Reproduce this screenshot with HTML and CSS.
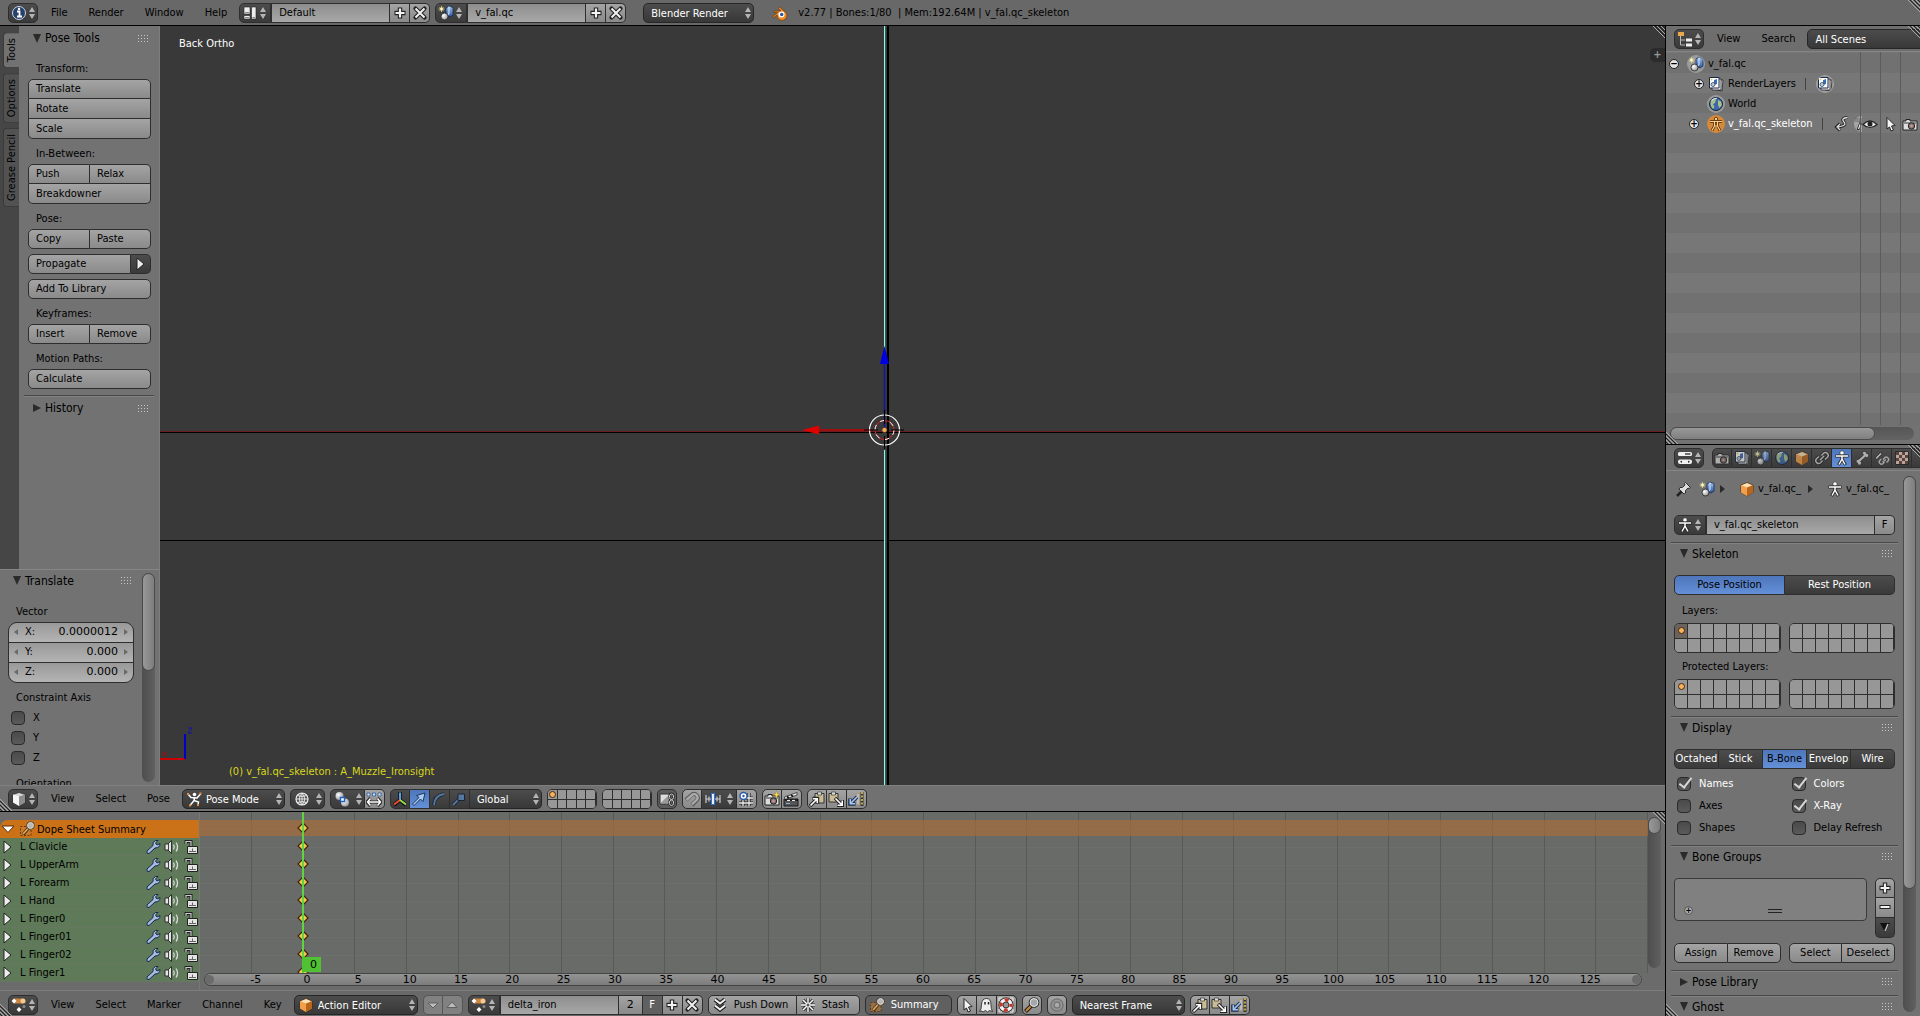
FILE: index.html
```html
<!DOCTYPE html>
<html lang="en">

<head>
    <meta charset="UTF-8">
    <meta name="viewport" content="width=device-width, initial-scale=1.0">
    <title>Blender</title>
    <link rel="stylesheet" href="styles.css">
</head>

<body>
    <!-- icon set, every icon is 16x16 -->
    <svg class="defs" aria-hidden="true">
        <defs>
            <linearGradient id="gBlue" x1="0" y1="0" x2="0" y2="1">
                <stop offset="0" stop-color="#9cc3f0" />
                <stop offset="1" stop-color="#2c56a0" />
            </linearGradient>
            <radialGradient id="gBall" cx=".35" cy=".35" r=".8">
                <stop offset="0" stop-color="#fff" />
                <stop offset="1" stop-color="#888" />
            </radialGradient>
        </defs>
        <symbol id="updown" viewBox="0 0 8 16">
            <path d="M4 2 7 7H1zM4 14 7 9H1z" fill="#b4b4b4" />
        </symbol>
        <symbol id="corner" viewBox="0 0 12 12">
            <path d="M0 0 12 12M4 0 12 8M8 0 12 4" stroke="#a8a8a8" />
            <path d="M2 0 12 10M6 0 12 6M10 0 12 2" stroke="#222" />
        </symbol>
        <symbol id="info" viewBox="0 0 16 16">
            <circle cx="8" cy="8" r="6.5" fill="#26416b" stroke="#c9d4e4" stroke-width="1" />
            <path d="M6 6.500H8.500V11M6 11.500H11" stroke="#fff" stroke-width="1.800" fill="none" />
            <circle cx="8" cy="4" r="1.200" fill="#fff" />
        </symbol>
        <symbol id="screens" viewBox="0 0 16 16">
            <path d="M2 2H8V9H2zM2 10.500H8V14H2zM9.500 2H14V14H9.500z" fill="#eee" stroke="#222" stroke-width=".6" />
            <path d="M3 12.500H7M3 7.500H7M10.500 12.500H13" stroke="#888" />
        </symbol>
        <symbol id="scene" viewBox="0 0 16 16">
            <path d="M8 3 11 1 15 2.500V10L12 12 8 10z" fill="url(#gBlue)" stroke="#16284a" stroke-width=".8" />
            <path d="M11 1.500V9L8.500 10" stroke="#dcecff" fill="none" />
            <circle cx="6.500" cy="11.500" r="3.500" fill="url(#gBall)" stroke="#222" stroke-width=".8" />
            <path d="M3.500 1V7M.5 4H6.500M1.500 2 5.500 6M5.500 2 1.500 6" stroke="#e8e090" stroke-width=".8" />
            <circle cx="3.500" cy="4" r="1.300" fill="#fffbc8" />
        </symbol>
        <symbol id="plus" viewBox="0 0 16 16">
            <path d="M8 2.500V13.500M2.500 8H13.500" stroke="#222" stroke-width="4.400" />
            <path d="M8 3.500V12.500M3.500 8H12.500" stroke="#f2f2f2" stroke-width="2.200" />
        </symbol>
        <symbol id="minus" viewBox="0 0 16 16">
            <path d="M2.500 8H13.500" stroke="#222" stroke-width="4" />
            <path d="M3.500 8H12.500" stroke="#f2f2f2" stroke-width="2" />
        </symbol>
        <symbol id="cross" viewBox="0 0 16 16">
            <path d="M3.500 3.500 12.500 12.500M12.500 3.500 3.500 12.500" stroke="#222" stroke-width="4.200" stroke-linecap="round" />
            <path d="M3.500 3.500 12.500 12.500M12.500 3.500 3.500 12.500" stroke="#f2f2f2" stroke-width="2" />
        </symbol>
        <symbol id="blender" viewBox="0 0 16 16">
            <path d="M7.500 2 14 7.500A5 5 0 1 1 5 10L1.500 12.800.8 11.500 5.500 7.500H2V6H9L6.500 3.500z" fill="#f08a24" stroke="#6d3a08" stroke-width=".7" />
            <circle cx="9.500" cy="9.500" r="3" fill="#fff" />
            <circle cx="9.700" cy="9.500" r="1.700" fill="#2355a0" />
        </symbol>
        <symbol id="view3d" viewBox="0 0 16 16">
            <path d="M2 3.500 8 1.500 14 3.500V11.500L8 15 2 11.500z" fill="#d8d8d8" stroke="#222" stroke-width=".6" />
            <path d="M2 3.500 8 5.500V15L2 11.500z" fill="#f6f6f6" />
            <path d="M14 3.500 8 5.500V15L14 11.500z" fill="#8d8d8d" />
        </symbol>
        <symbol id="pose" viewBox="0 0 16 16">
            <circle cx="8.500" cy="3.500" r="1.800" fill="#fff" />
            <path d="M2 3 5 6.500 11 7 14.500 3M8.500 7 8 9.500 12.500 11 12 14M8 9.500 4 14.500" stroke="#fff" stroke-width="1.500" fill="none" />
            <path d="M1 2h2v2H1zM13.500 1.500h2v2h-2zM11 13h2v2h-2zM3 13.500h2v2H3z" fill="#e68a3c" />
        </symbol>
        <symbol id="wire" viewBox="0 0 16 16">
            <circle cx="8" cy="8" r="6" fill="#555" stroke="#eee" stroke-width="1.200" />
            <path d="M8 2V14M2 8H14M3.500 4.500Q8 6.500 12.500 4.500M3.500 11.500Q8 9.500 12.500 11.500M8 2Q2.500 8 8 14M8 2Q13.500 8 8 14" stroke="#eee" stroke-width=".9" fill="none" />
        </symbol>
        <symbol id="pivot" viewBox="0 0 16 16">
            <circle cx="5.500" cy="5" r="4" fill="url(#gBall)" />
            <circle cx="11" cy="11.500" r="4" fill="url(#gBall)" />
            <path d="M6.500 6.500h4v4h-4z" fill="#fff" stroke="#1f5fc8" stroke-width="1.400" />
        </symbol>
        <symbol id="centers" viewBox="0 0 16 16">
            <path d="M4.500 7 1 11 4.500 15M11.500 7 15 11 11.500 15M2 11H14" stroke="#222" stroke-width="3" fill="none" />
            <path d="M4.500 7.500 1.500 11 4.500 14.500M11.500 7.500 14.500 11 11.500 14.500M2 11H14" stroke="#fff" stroke-width="1.500" fill="none" />
            <path d="M1 2h3v3H1zM6.500 2h3v3h-3zM12 2h3v3h-3z" fill="#cfe0f6" stroke="#2d5b98" stroke-width=".8" />
        </symbol>
        <symbol id="axes" viewBox="0 0 16 16">
            <path d="M8 1V9M8 9 2 14M8 9 14 14" stroke="#111" stroke-width="3.600" />
            <path d="M8 1.500V9" stroke="#5b9cf0" stroke-width="2" />
            <path d="M8 9 2 13.500" stroke="#ee4a30" stroke-width="2" />
            <path d="M8 9 14 13.500" stroke="#8fe04c" stroke-width="2" />
        </symbol>
        <symbol id="arrow" viewBox="0 0 16 16">
            <path d="M1.500 13 8 6.500 5.500 4.500 14 2 12 10.500 9.500 8 3 14.500z" fill="#a9cbf4" stroke="#12284e" stroke-width=".9" />
        </symbol>
        <symbol id="arc" viewBox="0 0 16 16">
            <path d="M3 14Q3 5 13 3" stroke="#1a2433" stroke-width="3.600" fill="none" />
            <path d="M3 14Q3 5 13 3" stroke="#56789f" stroke-width="1.800" fill="none" />
        </symbol>
        <symbol id="scale" viewBox="0 0 16 16">
            <path d="M2 14 9 7" stroke="#1a2433" stroke-width="3.500" />
            <path d="M2 14 9 7" stroke="#56789f" stroke-width="1.800" />
            <path d="M7 3h6.500v6.500H7z" fill="#56789f" stroke="#1a2433" />
        </symbol>
        <symbol id="layerlock" viewBox="0 0 16 16">
            <path d="M1 3H11V13H1z" fill="#ddd" stroke="#333" />
            <path d="M2 11.500 10 4V12H2z" fill="#999" />
            <path d="M12.500 2.500a2 2 0 0 1 2 2v2a2 2 0 0 1-4 0v-2a2 2 0 0 1 2-2zM12.500 8.500a2 2 0 0 1 2 2v2a2 2 0 0 1-4 0v-2a2 2 0 0 1 2-2z" fill="none" stroke="#222" stroke-width="2" />
            <path d="M12.500 3a2 2 0 0 1 2 2v1.500a2 2 0 0 1-4 0V5a2 2 0 0 1 2-2zM12.500 9a2 2 0 0 1 2 2v1.500a2 2 0 0 1-4 0V11a2 2 0 0 1 2-2z" fill="none" stroke="#ccc" />
        </symbol>
        <symbol id="magnet" viewBox="0 0 16 16">
            <path d="M2 9 8 3.500A3.800 3.800 0 0 1 13 9L8 14" stroke="#555" stroke-width="4" fill="none" />
            <path d="M2.500 9 8.500 3.500A3.500 3.500 0 0 1 13 8.500L8 13.500" stroke="#aaa" stroke-width="2.400" fill="none" />
        </symbol>
        <symbol id="increment" viewBox="0 0 16 16">
            <path d="M1 4V12M4 5.500V10.500M12 5.500V10.500M15 4V12M1 8H15" stroke="#ccc" stroke-width="1.200" />
            <path d="M8 2V14" stroke="#2d70e0" stroke-width="4" />
            <path d="M8 3V13" stroke="#fff" stroke-width="1.800" />
        </symbol>
        <symbol id="snapgrid" viewBox="0 0 16 16">
            <path d="M1 12H15M8 7H15M5 9V15M11 2V15" stroke="#222" stroke-width="3.200" />
            <path d="M1 12H15M8 7H15M5 9V15M11 2V15" stroke="#eee" stroke-width="1.300" />
            <circle cx="5.500" cy="5" r="3.500" fill="#fff" stroke="#2b5ba8" stroke-width="1.400" />
            <circle cx="5.500" cy="5" r="1.200" fill="#2b5ba8" />
        </symbol>
        <symbol id="camera" viewBox="0 0 16 16">
            <path d="M1 5H4V3.500H8V5H15V14H1z" fill="#ddd" stroke="#222" />
            <path d="M2 7H14" stroke="#888" stroke-width="2" />
            <circle cx="9.500" cy="10" r="3.200" fill="#777" stroke="#222" />
            <circle cx="9.500" cy="10" r="1.400" fill="#d88" />
        </symbol>
        <symbol id="star" viewBox="0 0 16 16">
            <path d="M12.500 0 13.500 3 16 3.500 13.500 4.500 12.500 7.500 11.500 4.500 9 3.500 11.500 3z" fill="#ffdf50" stroke="#a67c10" stroke-width=".4" />
        </symbol>
        <symbol id="clapper" viewBox="0 0 16 16">
            <path d="M1 8H15V15H1z" fill="#555" stroke="#1a1a1a" />
            <path d="M1.500 6 14 1.500V4L2 8.500z" fill="#eee" stroke="#1a1a1a" stroke-width=".7" />
            <path d="M4 5.500 6 7M8 4 10 5.500M2 9H5M7 9H10M12 9H15" stroke="#111" stroke-width="1.600" />
            <path d="M4 9.500H7M9 9.500H12" stroke="#eee" />
            <path d="M3 12.500H7" stroke="#78b4e8" />
        </symbol>
        <symbol id="copy" viewBox="0 0 16 16">
            <path d="M6 2.500H15V12H6z" fill="#c9bb94" stroke="#333" />
            <path d="M8.500 1H12.500V4H8.500z" fill="#ddd" stroke="#333" stroke-width=".7" />
            <path d="M1 15 8 8M3.500 7.500H8.500V12.500" stroke="#222" stroke-width="3.400" fill="none" />
            <path d="M1.500 14.500 8 8M4 7.800H8.300V12" stroke="#fff" stroke-width="1.600" fill="none" />
        </symbol>
        <symbol id="paste" viewBox="0 0 16 16">
            <path d="M1 2.500H10V11H1z" fill="#c9bb94" stroke="#333" />
            <path d="M3.500 1H7.500V4H3.500z" fill="#ddd" stroke="#333" stroke-width=".7" />
            <path d="M7 7 14 14M14.500 9V14.500H9" stroke="#222" stroke-width="3.400" fill="none" />
            <path d="M7.500 7.500 14 14M14.200 9.500V14.200H9.500" stroke="#fff" stroke-width="1.600" fill="none" />
        </symbol>
        <symbol id="pasteflip" viewBox="0 0 16 16">
            <path d="M7 2H13V14H7z" fill="#a09a8c" />
            <path d="M10 3V13" stroke="#bbb" stroke-width="2" />
            <path d="M14 1V15" stroke="#333" stroke-width="3" />
            <path d="M14 1V15" stroke="#f0d050" stroke-width="1.500" stroke-dasharray="2 1.500" />
            <path d="M9 6 2.500 12.500M2 7.500V13H7.500" stroke="#1b2f52" stroke-width="3.600" fill="none" />
            <path d="M9 6 2.500 12.500M2.300 8V12.700H7" stroke="#a6c4ec" stroke-width="1.600" fill="none" />
        </symbol>
        <symbol id="action" viewBox="0 0 16 16">
            <path d="M3 4H12" stroke="#c98640" stroke-width="5" />
            <path d="M3 1.500 5.500 4 3 6.500.5 4zM8 10 10.500 12.500 8 15 5.500 12.500z" fill="#fff" />
            <circle cx="12" cy="4" r="2.500" fill="#f7c893" />
            <circle cx="13" cy="9.500" r="1.500" fill="#888" />
        </symbol>
        <symbol id="object" viewBox="0 0 16 16">
            <path d="M2 4 8 1.500 14 4V11.500L8 15 2 11.500z" fill="#ffe0b5" stroke="#402000" stroke-width=".7" />
            <path d="M2 4 8 6.500V15L2 11.500z" fill="#f0a04c" />
            <path d="M14 4 8 6.500V15L14 11.500z" fill="#b9661a" />
        </symbol>
        <symbol id="down" viewBox="0 0 16 16">
            <path d="M3 6H13L8 11z" fill="#ccc" stroke="#555" />
        </symbol>
        <symbol id="up" viewBox="0 0 16 16">
            <path d="M3 10.500H13L8 5z" fill="#ccc" stroke="#555" />
        </symbol>
        <symbol id="push" viewBox="0 0 16 16">
            <path d="M3 2.500 8 6.500 13 2.500M3 8.500 8 12.500 13 8.500" stroke="#222" stroke-width="4.200" fill="none" />
            <path d="M3 2.500 8 6.500 13 2.500M3 8.500 8 12.500 13 8.500" stroke="#f2f2f2" stroke-width="2" fill="none" />
        </symbol>
        <symbol id="snow" viewBox="0 0 16 16">
            <path d="M8 1V15M1 8H15M3 3 13 13M13 3 3 13" stroke="#333" stroke-width="3.200" />
            <path d="M8 1V15M1 8H15M3 3 13 13M13 3 3 13" stroke="#fff" stroke-width="1.400" />
            <circle cx="8" cy="8" r="1.500" fill="#555" />
        </symbol>
        <symbol id="summary" viewBox="0 0 16 16">
            <path d="M1.500 5.500H12V14.500H1.500z" fill="#c87f38" fill-opacity=".5" stroke="#6b3a0a" stroke-dasharray="2 1.500" />
            <path d="M4 13.500 9.500 7" stroke="#4a2c0a" stroke-width="3.400" />
            <path d="M4 13 9.500 7" stroke="#d9a86a" stroke-width="1.800" />
            <circle cx="11.500" cy="4.500" r="3" fill="#9a9a9a" stroke="#3a3a3a" stroke-width="2.200" />
            <circle cx="11.500" cy="4.500" r="3" fill="#b8b8b8" stroke="#e6d8c6" stroke-width="1" />
        </symbol>
        <symbol id="cursor" viewBox="0 0 16 16">
            <path d="M5 1.500 13 9.500 9.500 10 11.500 14 9 15 7.500 11 5 13z" fill="#f4f4f4" stroke="#222" />
        </symbol>
        <symbol id="ghost" viewBox="0 0 16 16">
            <path d="M1.500 14.500Q3.500 13 3.500 7Q4 1.500 8.500 1.500Q13 1.500 13 8Q13 12 14.500 14.500L11.500 13.500 9.500 15 7.500 13.500 5 15 4 14z" fill="#eee" stroke="#333" stroke-width=".9" />
            <path d="M7 5V7.500M10.500 5V7.500" stroke="#222" stroke-width="1.500" />
        </symbol>
        <symbol id="buoy" viewBox="0 0 16 16">
            <circle cx="8" cy="8" r="5" fill="none" stroke="#222" stroke-width="5" />
            <circle cx="8" cy="8" r="5" fill="none" stroke="#f4f4f4" stroke-width="3.500" />
            <circle cx="8" cy="8" r="5" fill="none" stroke="#c0392b" stroke-width="3.500" stroke-dasharray="3.927 3.927" stroke-dashoffset="1.963" />
            <path d="M1 1H4M1 1V4M12 1H15V4M1 12V15H4M12 15H15V12" stroke="#eee" fill="none" />
        </symbol>
        <symbol id="lens" viewBox="0 0 16 16">
            <path d="M1.500 14.500 7 9" stroke="#2b1b08" stroke-width="4" />
            <path d="M2 14 7 9" stroke="#c58a48" stroke-width="2" />
            <circle cx="10" cy="5.500" r="4.300" fill="#b8c0c8" stroke="#222" stroke-width="2" />
            <circle cx="10" cy="5.500" r="4" fill="#a4a8ac" stroke="#eee" stroke-width="1" />
        </symbol>
        <symbol id="prop" viewBox="0 0 16 16">
            <circle cx="8" cy="8" r="6" fill="#999" stroke="#777" stroke-width="1.500" />
            <circle cx="8" cy="8" r="3" fill="#aaa" stroke="#777" stroke-width="1.500" />
        </symbol>
        <symbol id="outliner" viewBox="0 0 16 16">
            <path d="M1 1H7V5H1z" fill="#e8a84c" />
            <path d="M3.500 5V14H8M3.500 9H8" stroke="#bbb" fill="none" />
            <path d="M9 7.500H15V10.500H9zM9 12.500H15V15.500H9z" fill="#f0f0f0" />
        </symbol>
        <symbol id="layers" viewBox="0 0 16 16">
            <path d="M6 4H15L14 15 5 13z" fill="#ddd" stroke="#222" stroke-width=".8" />
            <path d="M4 3H13V14H4z" fill="#eee" stroke="#222" stroke-width=".8" />
            <path d="M1.500 1.500H11V12H1.500z" fill="#fff" stroke="#16284a" />
            <path d="M6 4 9 3V8L6 9z" fill="#3a6db8" />
            <circle cx="5" cy="8.500" r="2" fill="#bcd" stroke="#234" stroke-width=".7" />
            <circle cx="3.500" cy="3.500" r="1" fill="#e8c860" />
        </symbol>
        <symbol id="world" viewBox="0 0 16 16">
            <circle cx="8" cy="8" r="6.500" fill="#3c68a8" stroke="#12203a" />
            <path d="M3 4Q6 2 8 3.500L7 7 5 8 6.500 11 5 13Q1.500 10 3 4zM10 4 13 5.500 14 9 11.500 12 10 9z" fill="#a9c08c" />
            <path d="M4 4Q6 2 9 2.200" stroke="#dcecff" fill="none" />
        </symbol>
        <symbol id="armature" viewBox="0 0 16 16">
            <circle cx="8" cy="3" r="2.200" fill="#fff" stroke="#222" stroke-width=".6" />
            <path d="M1.500 6H14.500M8 5.500V9.500M8 9 4.500 15M8 9 11.500 15" stroke="#222" stroke-width="3" fill="none" />
            <path d="M2 6H14M8 5.500V9.500M8 9 5 14.500M8 9 11 14.500" stroke="#fff" stroke-width="1.500" fill="none" />
        </symbol>
        <symbol id="armaturedata" viewBox="0 0 16 16">
            <path d="M2 5.500H14M6.500 6V10L4 14.500M9.500 6V10L12 14.500" stroke="#4a2804" stroke-width="2.600" fill="none" />
            <path d="M2 5.500H14M6.500 6V10L4 14.500M9.500 6V10L12 14.500M6.500 10H9.500" stroke="#ffd08c" stroke-width="1.200" fill="none" />
            <circle cx="8" cy="3" r="1.700" fill="#ffd08c" stroke="#4a2804" stroke-width=".8" />
        </symbol>
        <symbol id="poseline" viewBox="0 0 16 16">
            <path d="M13.500 1.500Q7 2 9.500 5.500Q14 9.500 4 11M6 7.500 2.500 11 6 14.500" stroke="#222" stroke-width="3" fill="none" />
            <path d="M13.500 1.500Q7 2 9.500 5.500Q14 9.500 4 11M6 8 3 11 6 14" stroke="#ddd" stroke-width="1.300" fill="none" />
        </symbol>
        <symbol id="half" viewBox="0 0 10 16">
            <path d="M10 0A8 8 0 0 0 10 16z" fill="#a5a5a5" />
            <path d="M3 4H10M9 6 6 14" stroke="#222" stroke-width="2.600" fill="none" />
            <path d="M3 4H10M9 6 6.500 13" stroke="#eee" stroke-width="1.200" fill="none" />
        </symbol>
        <symbol id="eye" viewBox="0 0 16 16">
            <path d="M1 8.500Q8 1.500 15 8.500Q8 14.500 1 8.500z" fill="#eee" stroke="#222" stroke-width="1.200" />
            <circle cx="8" cy="8" r="2.500" fill="#222" />
        </symbol>
        <symbol id="buttons" viewBox="0 0 16 16">
            <rect x="1" y="2" width="14" height="4" rx="1.500" fill="#f0f0f0" />
            <path d="M8 3.200H13.500V4.800H8z" fill="#444" />
            <rect x="1" y="9.500" width="14" height="4.500" rx="2" fill="#f0f0f0" />
            <path d="M5 10.500V13L3 11.750zM11 10.500V13L13 11.750z" fill="#333" />
        </symbol>
        <symbol id="chain" viewBox="0 0 16 16">
            <path d="M6 10 10 6M7.500 5.500 9.500 3.300A2.800 2.800 0 0 1 13.500 7.200L11 9.500M8.500 10.500 6.500 12.700A2.800 2.800 0 0 1 2.500 8.800L5 6.500" stroke="#222" stroke-width="3.400" fill="none" />
            <path d="M6 10 10 6M7.500 5.500 9.500 3.300A2.800 2.800 0 0 1 13.500 7.200L11 9.500M8.500 10.500 6.500 12.700A2.800 2.800 0 0 1 2.500 8.800L5 6.500" stroke="#ccc" stroke-width="1.500" fill="none" />
        </symbol>
        <symbol id="bone" viewBox="0 0 16 16">
            <path d="M2 11A2 2 0 0 1 4.500 9.500L9.500 5A2 2 0 1 1 12.500 3.500A2 2 0 1 1 11.500 7L6.500 11.500A2 2 0 1 1 3.500 13A2 2 0 0 1 2 11z" fill="#ddd" stroke="#222" stroke-width=".8" />
        </symbol>
        <symbol id="bonechain" viewBox="0 0 16 16">
            <path d="M1 8 3 9.500 6 6 8 4.500 6.500 2 5 4 3 6z" fill="#ddd" stroke="#222" stroke-width=".8" />
            <path d="M9 9.500 10.500 8A2.200 2.200 0 0 1 14 11L12.500 12.500M10.500 12 9 13.500A2.200 2.200 0 0 1 5.800 10.500L7.300 9M8.500 12 12 9.500" stroke="#ccc" stroke-width="1.500" fill="none" />
        </symbol>
        <symbol id="checker" viewBox="0 0 16 16">
            <path d="M1.500 1.500H14.500V14.500H1.500z" fill="#e6d2c6" stroke="#222" />
            <path d="M2 2h3v3H2zM8 2h3v3H8zM5 5h3v3H5zM11 5h3v3h-3zM2 8h3v3H2zM8 8h3v3H8zM5 11h3v3H5zM11 11h3v3h-3z" fill="#6c4238" />
        </symbol>
        <symbol id="pin" viewBox="0 0 16 16">
            <path d="M1 15 6 10" stroke="#222" stroke-width="2.500" />
            <path d="M9.500 1.500 14.500 6.500 13 7.500 12 7 9.500 9.500 9.500 12 8 13 3 8 4 6.500 6.500 6.500 9 4 8.500 2.500z" fill="#ddd" stroke="#222" stroke-width=".9" />
        </symbol>
        <symbol id="wrench" viewBox="0 0 16 16">
            <path d="M2 12 8 6.500Q7 3 10.500 1.500L13 1.500 10.500 4 12 6 15 4.500Q15 9 10 9L4 14.500Q1 15 2 12z" fill="#a6bde0" stroke="#16284a" stroke-width="1" />
        </symbol>
        <symbol id="speaker" viewBox="0 0 16 16">
            <path d="M1 5H4L7.500 1.500V14.500L4 11H1z" fill="#e4e4e4" stroke="#222" stroke-width=".9" />
            <path d="M4.500 5V11" stroke="#444" />
            <path d="M9.500 5.500Q11 8 9.500 10.500M12 3.500Q15 8 12 12.500" stroke="#ddd" stroke-width="1.300" fill="none" />
        </symbol>
        <symbol id="lock" viewBox="0 0 16 16">
            <path d="M3 5V2.500H8V8" stroke="#222" stroke-width="3" fill="none" />
            <path d="M3 5V2.500H8V8" stroke="#ccc" stroke-width="1.200" fill="none" />
            <path d="M4.500 7.500H14.500V14.500H4.500z" fill="#e4e4e4" stroke="#222" />
            <path d="M9.500 9.500V12.500M6 12.500H13" stroke="#666" />
        </symbol>
        <symbol id="triRight" viewBox="0 0 16 16">
            <path d="M4 2V14L11 8z" fill="#eee" stroke="#222" />
        </symbol>
        <symbol id="triDown" viewBox="0 0 16 16">
            <path d="M2 5H14L8 11.500z" fill="#fff" stroke="#5a2f05" />
        </symbol>
        <symbol id="key" viewBox="0 0 12 12">
            <path d="M6 1 11 6 6 11 1 6z" fill="#f5c850" stroke="#3a2408" stroke-width="1.200" />
        </symbol>
    </svg>

    <header class="bar bar-top">
        <button class="btn dark type" aria-label="Editor type"><svg class="icon"><use href="#info" /></svg><svg class="ud"><use href="#updown" /></svg></button>
        <nav class="menus">
            <button>File</button>
            <button>Render</button>
            <button>Window</button>
            <button>Help</button>
        </nav>
        <div class="row">
            <button class="btn dark type" aria-label="Screen"><svg class="icon"><use href="#screens" /></svg><svg class="ud"><use href="#updown" /></svg></button>
            <input class="text" aria-label="Screen name" value="Default">
            <button class="btn ic" aria-label="Add"><svg class="icon"><use href="#plus" /></svg></button>
            <button class="btn ic" aria-label="Remove"><svg class="icon"><use href="#cross" /></svg></button>
        </div>
        <div class="row">
            <button class="btn dark type" aria-label="Scene"><svg class="icon"><use href="#scene" /></svg><svg class="ud"><use href="#updown" /></svg></button>
            <input class="text" aria-label="Scene name" value="v_fal.qc">
            <button class="btn ic" aria-label="Add"><svg class="icon"><use href="#plus" /></svg></button>
            <button class="btn ic" aria-label="Remove"><svg class="icon"><use href="#cross" /></svg></button>
        </div>
        <div class="pick engine">
            <select aria-label="Render engine"><option>Blender Render</option></select>
            <svg class="ud"><use href="#updown" /></svg>
        </div>
        <div class="stats">
            <svg class="icon"><use href="#blender" /></svg>
            <span>v2.77 | Bones:1/80 &nbsp;| Mem:192.64M | v_fal.qc_skeleton</span>
        </div>
        <svg class="corner"><use href="#corner" /></svg>
    </header>

    <main class="screen">
        <div class="left">
            <section class="view">
                <aside class="shelf">
                    <div class="tools">
                        <div class="tabs">
                            <button class="tab on">Tools</button>
                            <button class="tab">Options</button>
                            <button class="tab">Grease Pencil</button>
                        </div>
                        <div class="tool-panels">
                            <section class="panel">
                                <h2 class="open">Pose Tools</h2>
                                <div class="panel-body tool-body">
                                    <h3>Transform:</h3>
                                    <div class="stack">
                                        <div class="row"><button class="btn">Translate</button></div>
                                        <div class="row"><button class="btn">Rotate</button></div>
                                        <div class="row"><button class="btn">Scale</button></div>
                                    </div>
                                    <h3>In-Between:</h3>
                                    <div class="stack">
                                        <div class="row"><button class="btn">Push</button><button class="btn">Relax</button></div>
                                        <div class="row"><button class="btn">Breakdowner</button></div>
                                    </div>
                                    <h3>Pose:</h3>
                                    <div class="row"><button class="btn">Copy</button><button class="btn">Paste</button></div>
                                    <div class="row"><button class="btn">Propagate</button><button class="btn dark ic" aria-label="Propagate options"><svg class="icon"><use href="#triRight" /></svg></button></div>
                                    <div class="row"><button class="btn">Add To Library</button></div>
                                    <h3>Keyframes:</h3>
                                    <div class="row"><button class="btn">Insert</button><button class="btn">Remove</button></div>
                                    <h3>Motion Paths:</h3>
                                    <div class="row"><button class="btn">Calculate</button></div>
                                </div>
                            </section>
                            <section class="panel">
                                <h2>History</h2>
                            </section>
                        </div>
                    </div>
                    <div class="operator">
                        <section class="panel">
                            <h2 class="open">Translate</h2>
                            <div class="panel-body op-body">
                                <h3>Vector</h3>
                                <div class="nums">
                                    <label class="num">X:<input value="0.0000012"></label>
                                    <label class="num">Y:<input value="0.000"></label>
                                    <label class="num">Z:<input value="0.000"></label>
                                </div>
                                <h3>Constraint Axis</h3>
                                <div>
                                    <label class="check"><input type="checkbox">X</label>
                                    <label class="check"><input type="checkbox">Y</label>
                                    <label class="check"><input type="checkbox">Z</label>
                                </div>
                                <h3>Orientation</h3>
                            </div>
                        </section>
                        <div class="scroll"><div class="thumb op-thumb"></div></div>
                    </div>
                </aside>
                <div class="canvas">
                    <span class="view-name">Back Ortho</span>
                    <div class="line-x"></div>
                    <div class="line-floor"></div>
                    <div class="line-z"></div>
                    <svg class="gizmo" viewBox="0 0 100 120" aria-hidden="true">
                        <path d="M83.500 18V106" stroke="#393939" stroke-width="4" />
                        <path d="M83.500 18V86" stroke="#1414a8" stroke-width="1.500" />
                        <path d="M83.500 2 88 20H79z" fill="#0000e0" />
                        <path d="M18 86H70" stroke="#c00000" stroke-width="1.500" />
                        <path d="M1 86 18 81.500V90.500z" fill="#e00000" />
                        <path d="M68 88.500H99" stroke="#000" />
                        <circle cx="83.500" cy="86" r="15" fill="none" stroke="#fff" stroke-width="1.200" />
                        <circle cx="83.500" cy="86" r="9.500" fill="none" stroke="#d02020" />
                        <circle cx="83.500" cy="86" r="9.500" fill="none" stroke="#fff" stroke-dasharray="5 5" />
                        <path d="M63 86H77M90 86H103M83.500 66V80M83.500 92V105" stroke="#000" />
                        <circle cx="83.500" cy="86" r="2.600" fill="#f0a55a" stroke="#3a2408" stroke-width=".6" />
                    </svg>
                    <svg class="mini-axis" viewBox="0 0 34 36" aria-hidden="true">
                        <path d="M0 32H25" stroke="#c00" stroke-width="2" />
                        <path d="M25 32V7" stroke="#0000c8" stroke-width="2" />
                        <path d="M28 1H32L28 6H32" stroke="#1414a8" fill="none" />
                        <path d="M2 25 7 29M7 25 2 29" stroke="#a01010" fill="none" />
                    </svg>
                    <span class="active-bone">(0) v_fal.qc_skeleton : A_Muzzle_Ironsight</span>
                    <svg class="corner"><use href="#corner" /></svg>
                    <button class="region-toggle" aria-label="Show properties">+</button>
                </div>
            </section>

            <div class="bar bar-view">
                <button class="btn dark type" aria-label="Editor type"><svg class="icon"><use href="#view3d" /></svg><svg class="ud"><use href="#updown" /></svg></button>
                <nav class="menus">
                    <button>View</button>
                    <button>Select</button>
                    <button>Pose</button>
                </nav>
                <div class="pick with-icon mode">
                    <svg class="icon"><use href="#pose" /></svg>
                    <select aria-label="Mode"><option>Pose Mode</option></select>
                    <svg class="ud"><use href="#updown" /></svg>
                </div>
                <button class="btn dark icon-pick" aria-label="Shading"><svg class="icon"><use href="#wire" /></svg><svg class="ud"><use href="#updown" /></svg></button>
                <div class="row">
                    <button class="btn dark icon-pick" aria-label="Pivot"><svg class="icon"><use href="#pivot" /></svg><svg class="ud"><use href="#updown" /></svg></button>
                    <button class="btn ic" aria-label="Manipulate centers"><svg class="icon"><use href="#centers" /></svg></button>
                </div>
                <div class="row">
                    <button class="btn dark ic" aria-label="Manipulator"><svg class="icon"><use href="#axes" /></svg></button>
                    <button class="btn blue ic" aria-label="Translate"><svg class="icon"><use href="#arrow" /></svg></button>
                    <button class="btn dark ic" aria-label="Rotate"><svg class="icon"><use href="#arc" /></svg></button>
                    <button class="btn dark ic" aria-label="Scale"><svg class="icon"><use href="#scale" /></svg></button>
                    <div class="pick orient">
                        <select aria-label="Orientation"><option>Global</option></select>
                        <svg class="ud"><use href="#updown" /></svg>
                    </div>
                </div>
                <div class="layers small" data-cols="5" data-active="0"></div>
                <div class="layers small" data-cols="5"></div>
                <button class="btn dim ic" aria-label="Lock layers"><svg class="icon"><use href="#layerlock" /></svg></button>
                <div class="row">
                    <button class="btn ic" aria-label="Snap"><svg class="icon"><use href="#magnet" /></svg></button>
                    <button class="btn dark icon-pick" aria-label="Snap element"><svg class="icon"><use href="#increment" /></svg><svg class="ud"><use href="#updown" /></svg></button>
                    <button class="btn ic" aria-label="Absolute grid snap"><svg class="icon"><use href="#snapgrid" /></svg></button>
                </div>
                <div class="row">
                    <button class="btn ic" aria-label="Render still"><svg class="icon"><use href="#camera" /><use href="#star" /></svg></button>
                    <button class="btn ic" aria-label="Render animation"><svg class="icon"><use href="#clapper" /></svg></button>
                </div>
                <div class="row">
                    <button class="btn ic" aria-label="Copy pose"><svg class="icon"><use href="#copy" /></svg></button>
                    <button class="btn ic" aria-label="Paste pose"><svg class="icon"><use href="#paste" /></svg></button>
                    <button class="btn ic" aria-label="Paste flipped"><svg class="icon"><use href="#pasteflip" /></svg></button>
                </div>
                <svg class="corner corner-bl"><use href="#corner" /></svg>
            </div>

            <section class="dope">
                <div class="channels" id="channels">
                    <div class="channel summary">
                        <svg class="icon"><use href="#triDown" /></svg>
                        <svg class="icon"><use href="#summary" /></svg>
                        <span>Dope Sheet Summary</span>
                    </div>
                </div>
                <div class="timeline">
                    <div class="frames">
                        <div class="band"></div>
                        <div class="current"></div>
                        <div class="keys" id="keys"></div>
                        <span class="current-label">0</span>
                    </div>
                    <div class="ruler" id="ruler"></div>
                </div>
                <div class="dope-side">
                    <div class="scroll"><div class="thumb dope-thumb"></div></div>
                    <svg class="corner"><use href="#corner" /></svg>
                </div>
            </section>

            <div class="bar bar-dope">
                <button class="btn dark type" aria-label="Editor type"><svg class="icon"><use href="#action" /></svg><svg class="ud"><use href="#updown" /></svg></button>
                <nav class="menus">
                    <button>View</button>
                    <button>Select</button>
                    <button>Marker</button>
                    <button>Channel</button>
                    <button>Key</button>
                </nav>
                <div class="pick with-icon editor">
                    <svg class="icon"><use href="#object" /></svg>
                    <select aria-label="Dope sheet mode"><option>Action Editor</option></select>
                    <svg class="ud"><use href="#updown" /></svg>
                </div>
                <div class="row off">
                    <button class="btn ic" aria-label="Next layer"><svg class="icon"><use href="#down" /></svg></button>
                    <button class="btn ic" aria-label="Previous layer"><svg class="icon"><use href="#up" /></svg></button>
                </div>
                <div class="row">
                    <button class="btn dark type" aria-label="Action"><svg class="icon"><use href="#action" /></svg><svg class="ud"><use href="#updown" /></svg></button>
                    <input class="text" aria-label="Action name" value="delta_iron">
                    <button class="btn users">2</button>
                    <button class="btn pressed ic">F</button>
                    <button class="btn ic" aria-label="Add"><svg class="icon"><use href="#plus" /></svg></button>
                    <button class="btn ic" aria-label="Unlink"><svg class="icon"><use href="#cross" /></svg></button>
                </div>
                <div class="row">
                    <button class="btn push"><svg class="icon"><use href="#push" /></svg>Push Down</button>
                    <button class="btn stash"><svg class="icon"><use href="#snow" /></svg>Stash</button>
                </div>
                <button class="btn pressed sum"><svg class="icon"><use href="#summary" /></svg>Summary</button>
                <div class="row">
                    <button class="btn ic" aria-label="Only selected"><svg class="icon"><use href="#cursor" /></svg></button>
                    <button class="btn ic" aria-label="Show hidden"><svg class="icon"><use href="#ghost" /></svg></button>
                    <button class="btn ic" aria-label="Only errors"><svg class="icon"><use href="#buoy" /></svg></button>
                </div>
                <button class="btn ic" aria-label="Filter"><svg class="icon"><use href="#lens" /></svg></button>
                <button class="btn ic" aria-label="Proportional editing"><svg class="icon"><use href="#prop" /></svg></button>
                <div class="pick snap">
                    <select aria-label="Auto snap"><option>Nearest Frame</option></select>
                    <svg class="ud"><use href="#updown" /></svg>
                </div>
                <div class="row">
                    <button class="btn ic" aria-label="Copy keys"><svg class="icon"><use href="#copy" /></svg></button>
                    <button class="btn ic" aria-label="Paste keys"><svg class="icon"><use href="#paste" /></svg></button>
                    <button class="btn ic" aria-label="Paste flipped"><svg class="icon"><use href="#pasteflip" /></svg></button>
                </div>
                <svg class="corner corner-bl"><use href="#corner" /></svg>
            </div>
        </div>

        <div class="right">
            <section class="outliner">
                <div class="bar bar-side">
                    <button class="btn dark type" aria-label="Editor type"><svg class="icon"><use href="#outliner" /></svg><svg class="ud"><use href="#updown" /></svg></button>
                    <nav class="menus">
                        <button>View</button>
                        <button>Search</button>
                    </nav>
                    <div class="pick scenes">
                        <select aria-label="Display mode"><option>All Scenes</option></select>
                    </div>
                    <svg class="corner"><use href="#corner" /></svg>
                </div>
                <div class="tree">
                    <div class="node">
                        <button class="fold">−</button>
                        <svg class="icon halo"><use href="#scene" /></svg>
                        <span>v_fal.qc</span>
                    </div>
                    <div class="node child">
                        <button class="fold">+</button>
                        <svg class="icon"><use href="#layers" /></svg>
                        <span>RenderLayers</span>
                        <i class="split"></i>
                        <svg class="icon halo"><use href="#layers" /></svg>
                    </div>
                    <div class="node child">
                        <i class="nofold"></i>
                        <svg class="icon halo"><use href="#world" /></svg>
                        <span>World</span>
                    </div>
                    <div class="node child deep">
                        <button class="fold">+</button>
                        <svg class="icon halo orange"><use href="#armaturedata" /></svg>
                        <span class="sel">v_fal.qc_skeleton</span>
                        <i class="split"></i>
                        <svg class="icon"><use href="#poseline" /></svg>
                        <svg class="icon cut"><use href="#half" /></svg>
                        <div class="toggles">
                            <svg class="icon"><use href="#eye" /></svg>
                            <svg class="icon"><use href="#cursor" /></svg>
                            <svg class="icon"><use href="#camera" /></svg>
                        </div>
                    </div>
                    <div class="cols"></div>
                </div>
                <div class="scroll flat"><div class="thumb tree-thumb"></div></div>
                <svg class="corner corner-bl"><use href="#corner" /></svg>
            </section>

            <section class="props">
                <div class="bar bar-side">
                    <button class="btn dark type" aria-label="Editor type"><svg class="icon"><use href="#buttons" /></svg><svg class="ud"><use href="#updown" /></svg></button>
                    <div class="row contexts">
                        <button class="btn dark ic" aria-label="Render"><svg class="icon"><use href="#camera" /></svg></button>
                        <button class="btn dark ic" aria-label="Render layers"><svg class="icon"><use href="#layers" /></svg></button>
                        <button class="btn dark ic" aria-label="Scene"><svg class="icon"><use href="#scene" /></svg></button>
                        <button class="btn dark ic" aria-label="World"><svg class="icon"><use href="#world" /></svg></button>
                        <button class="btn dark ic" aria-label="Object"><svg class="icon"><use href="#object" /></svg></button>
                        <button class="btn dark ic" aria-label="Constraints"><svg class="icon"><use href="#chain" /></svg></button>
                        <button class="btn blue ic" aria-label="Armature"><svg class="icon"><use href="#armature" /></svg></button>
                        <button class="btn dark ic" aria-label="Bone"><svg class="icon"><use href="#bone" /></svg></button>
                        <button class="btn dark ic" aria-label="Bone constraints"><svg class="icon"><use href="#bonechain" /></svg></button>
                        <button class="btn dark ic" aria-label="Texture"><svg class="icon"><use href="#checker" /></svg></button>
                        <button class="btn dark ic" aria-label="Particles"></button>
                    </div>
                    <svg class="corner"><use href="#corner" /></svg>
                </div>
                <div class="props-body">
                    <div class="props-list">
                        <div class="crumbs">
                            <svg class="icon"><use href="#pin" /></svg>
                            <svg class="icon"><use href="#scene" /></svg>
                            <i></i>
                            <svg class="icon"><use href="#object" /></svg>
                            <span>v_fal.qc_</span>
                            <i></i>
                            <svg class="icon"><use href="#armature" /></svg>
                            <span>v_fal.qc_</span>
                        </div>
                        <div class="panel-body">
                            <div class="row">
                                <button class="btn dark type" aria-label="Armature"><svg class="icon"><use href="#armature" /></svg><svg class="ud"><use href="#updown" /></svg></button>
                                <input class="text grow" aria-label="Armature name" value="v_fal.qc_skeleton">
                                <button class="btn ic">F</button>
                            </div>
                        </div>
                        <section class="panel">
                            <h2 class="open">Skeleton</h2>
                            <div class="panel-body skeleton">
                                <div class="row even">
                                    <button class="btn blue">Pose Position</button>
                                    <button class="btn dark">Rest Position</button>
                                </div>
                                <h3>Layers:</h3>
                                <div class="pair">
                                    <div class="layers" data-cols="8" data-active="0" data-on="1"></div>
                                    <div class="layers" data-cols="8"></div>
                                </div>
                                <h3>Protected Layers:</h3>
                                <div class="pair">
                                    <div class="layers" data-cols="8" data-active="0"></div>
                                    <div class="layers" data-cols="8"></div>
                                </div>
                            </div>
                        </section>
                        <section class="panel">
                            <h2 class="open">Display</h2>
                            <div class="panel-body">
                                <div class="row even five">
                                    <button class="btn dark">Octahed</button>
                                    <button class="btn dark">Stick</button>
                                    <button class="btn blue">B-Bone</button>
                                    <button class="btn dark">Envelop</button>
                                    <button class="btn dark">Wire</button>
                                </div>
                                <div class="checks">
                                    <label class="check"><input type="checkbox" checked><span>Names</span></label>
                                    <label class="check"><input type="checkbox" checked><span>Colors</span></label>
                                    <label class="check"><input type="checkbox"><span>Axes</span></label>
                                    <label class="check"><input type="checkbox" checked><span>X-Ray</span></label>
                                    <label class="check"><input type="checkbox"><span>Shapes</span></label>
                                    <label class="check"><input type="checkbox"><span>Delay Refresh</span></label>
                                </div>
                            </div>
                        </section>
                        <section class="panel">
                            <h2 class="open">Bone Groups</h2>
                            <div class="panel-body">
                                <div class="groups">
                                    <div class="list">
                                        <button class="fold">+</button>
                                        <i class="handle"></i>
                                    </div>
                                    <div class="stack">
                                        <div class="row"><button class="btn ic" aria-label="Add group"><svg class="icon"><use href="#plus" /></svg></button></div>
                                        <div class="row"><button class="btn ic" aria-label="Remove group"><svg class="icon"><use href="#minus" /></svg></button></div>
                                        <div class="row"><button class="btn dark ic" aria-label="More"><svg class="icon"><path d="M3 4H13L8 13z" fill="#111" /><path d="M11 5 8 12" stroke="#bbb" stroke-width="1.500" /></svg></button></div>
                                    </div>
                                </div>
                                <div class="pair">
                                    <div class="row even"><button class="btn">Assign</button><button class="btn">Remove</button></div>
                                    <div class="row even"><button class="btn">Select</button><button class="btn">Deselect</button></div>
                                </div>
                            </div>
                        </section>
                        <section class="panel">
                            <h2>Pose Library</h2>
                        </section>
                        <section class="panel">
                            <h2 class="open">Ghost</h2>
                        </section>
                    </div>
                    <div class="scroll"><div class="thumb props-thumb"></div></div>
                </div>
                <svg class="corner corner-bl"><use href="#corner" /></svg>
            </section>
        </div>
    </main>
    <script src="script.js"></script>
</body>

</html>
```

FILE: styles.css
```css
* {
    box-sizing: border-box;
}

body {
    margin: 0;
    height: 100vh;
    display: flex;
    flex-direction: column;
    overflow: hidden;
    background: #727272;
    color: #000;
    font: 11px/20px "DejaVu Sans Condensed", "DejaVu Sans", sans-serif;
}

button,
input,
select {
    font: inherit;
    color: inherit;
    margin: 0;
}

h2,
h3 {
    margin: 0;
    font-weight: normal;
}

h3 {
    font-size: 11px;
    height: 20px;
    padding-left: 8px;
}

.defs {
    position: absolute;
    width: 0;
    height: 0;
}

.icon {
    width: 16px;
    height: 16px;
    flex: none;
}

.ud {
    width: 8px;
    height: 16px;
    flex: none;
}

/* area corner grip */
.corner {
    position: absolute;
    top: 0;
    right: 0;
    width: 12px;
    height: 12px;
    pointer-events: none;
}

.corner-bl {
    top: auto;
    right: auto;
    left: 0;
    bottom: 0;
    transform: rotate(180deg);
}

/* header bars */
.bar {
    position: relative;
    display: flex;
    align-items: center;
    gap: 5px;
    flex: none;
    height: 26px;
    padding-left: 8px;
    overflow: hidden;
    white-space: nowrap;
}

.bar-top {
    background: #686868;
    border-bottom: 1px solid #000;
    padding-top: 1px;
}

.bar-view {
    height: 27px;
    background: #717171;
    border-top: 1px solid #808080;
    border-bottom: 1px solid #000;
}

.bar-dope {
    background: #696969;
    border-top: 1px solid #7d7d7d;
    padding-top: 2px;
}

.bar-side {
    background: #6e6e6e;
    border-bottom: 1px solid #858585;
    padding-top: 1px;
}

.menus {
    display: flex;
    gap: 21px;
    margin: 0 7px 0 8px;
}

.menus button {
    padding: 0;
    border: 0;
    background: none;
}

.stats {
    display: flex;
    align-items: center;
    gap: 10px;
    margin-left: 13px;
}

/* buttons */
.btn {
    display: flex;
    align-items: center;
    gap: 6px;
    height: 20px;
    padding: 0 7px;
    border: 1px solid #2e2e2e;
    border-radius: 5px;
    background: linear-gradient(#a4a4a4, #8a8a8a);
    white-space: nowrap;
    overflow: hidden;
}

.btn.dark {
    background: linear-gradient(#4c4c4c, #3a3a3a);
    color: #fff;
}

.btn.blue {
    background: linear-gradient(#4d76bb, #6490d8);
}

.btn.dim {
    background: #5c5c5c;
}

.btn.pressed {
    background: #606060;
    color: #fff;
}

.btn.ic {
    width: 20px;
    flex: none;
    padding: 0;
    justify-content: center;
}

.btn.type {
    width: 30px;
    flex: none;
    padding: 0 2px;
    gap: 1px;
}

.btn.icon-pick {
    width: 35px;
    flex: none;
    padding: 0 2px 0 3px;
    gap: 5px;
}

/* joined controls share their borders */
.row {
    display: flex;
}

.row > * + * {
    border-left: 0;
}

.row > :not(:first-child),
.row > :not(:first-child) select {
    border-top-left-radius: 0;
    border-bottom-left-radius: 0;
}

.row > :not(:last-child) {
    border-top-right-radius: 0;
    border-bottom-right-radius: 0;
}

.row .type {
    width: 32px;
}

.stack .row + .row .btn {
    border-top: 0;
    border-top-left-radius: 0;
    border-top-right-radius: 0;
}

.stack .row:not(:last-child) .btn {
    border-bottom-left-radius: 0;
    border-bottom-right-radius: 0;
}

.even .btn {
    flex: 1 1 0;
    min-width: 0;
    padding: 0 2px;
    justify-content: center;
}

.five .btn {
    padding: 0;
}

.text {
    width: 119px;
    height: 20px;
    padding: 0 7px;
    border: 1px solid #2e2e2e;
    border-radius: 5px;
    background: linear-gradient(#8e8e8e, #a8a8a8);
}

.text.grow {
    flex: 1;
    min-width: 0;
}

/* drop-downs */
.pick {
    position: relative;
}

.pick select {
    appearance: none;
    width: 100%;
    height: 20px;
    display: block;
    padding: 0 7px;
    border: 1px solid #262626;
    border-radius: 5px;
    background: linear-gradient(#4c4c4c, #383838);
    color: #fff;
}

.pick.with-icon select {
    padding-left: 23px;
}

.pick .icon {
    position: absolute;
    left: 4px;
    top: 2px;
}

.pick .ud {
    position: absolute;
    right: 2px;
    top: 2px;
    pointer-events: none;
}

.engine {
    width: 111px;
    margin-left: 12px;
}

.mode {
    width: 103px;
}

.orient {
    width: 72px;
}

.orient select {
    border-left: 0;
}

.editor {
    width: 124px;
}

.snap {
    width: 113px;
}

.scenes {
    width: 124px;
    flex: none;
}

/* layer toggles */
.layers {
    display: grid;
    grid-auto-rows: 15px;
    flex: 1;
    border: 1px solid #2e2e2e;
    border-radius: 5px;
    overflow: hidden;
    height: 30px;
}

.layers button {
    padding: 0;
    border: 0;
    border-right: 1px solid #2e2e2e;
    border-bottom: 1px solid #2e2e2e;
    background: #979797;
    display: flex;
    align-items: center;
    justify-content: center;
}

.layers .dot::before {
    content: '';
    width: 5px;
    height: 5px;
    border: 1px solid #4a2804;
    border-radius: 50%;
    background: #f5b060;
}

.layers .on {
    background: #6a625c;
}

.layers.small {
    flex: none;
    width: 50px;
    height: 20px;
    grid-auto-rows: 10px;
}

/* window */
.screen {
    flex: 1;
    display: flex;
    min-height: 0;
}

.left {
    flex: 1;
    min-width: 0;
    display: flex;
    flex-direction: column;
}

.right {
    flex: none;
    width: 255px;
    border-left: 1px solid #000;
    display: flex;
    flex-direction: column;
}

.view {
    flex: 1;
    min-height: 0;
    display: flex;
}

.shelf {
    flex: none;
    width: 160px;
    display: flex;
    flex-direction: column;
    background: #727272;
    border-right: 1px solid #7e7e7e;
}

.tools {
    flex: 1;
    min-height: 0;
    display: flex;
    overflow: hidden;
}

.tabs {
    flex: none;
    width: 19px;
    padding: 6px 0 0 3px;
    display: flex;
    flex-direction: column;
    gap: 5px;
    background: #464646;
}

.tab {
    writing-mode: vertical-rl;
    transform: rotate(180deg);
    padding: 5px 0;
    border: 1px solid #3a3a3a;
    border-left: 0;
    border-radius: 0 4px 4px 0;
    background: #525252;
    line-height: 15px;
}

.tab.on {
    background: #727272;
}

.tool-panels {
    flex: 1;
}

/* panels */
.panel {
    position: relative;
}

.panel + .panel::before,
.panel-body + .panel::before {
    content: '';
    display: block;
    height: 1px;
    background: #484848;
    box-shadow: 0 1px #838383;
}

.tool-panels .panel + .panel::before {
    margin: 0 5px;
}

.panel h2 {
    display: flex;
    align-items: center;
    gap: 4px;
    height: 24px;
    padding: 0 6px 0 9px;
    font-size: 12px;
}

.tool-panels h2 {
    padding: 0 11px 0 14px;
}

.operator h2 {
    padding: 0 3px 2px 13px;
}

.props h2 {
    padding-bottom: 2px;
}

.panel h2::before {
    content: '';
    border: solid transparent;
    border-width: 4px 0 4px 8px;
    border-left-color: #2a2a2a;
}

.panel h2.open::before {
    border-width: 9px 4px 0;
    border-color: #2a2a2a transparent transparent;
}

/* drag dots */
.panel h2::after {
    content: '';
    margin-left: auto;
    width: 10px;
    height: 7px;
    background:
        repeating-linear-gradient(transparent 0 1px, #727272 1px 3px),
        repeating-linear-gradient(to right, #c8c8c8 0 1px, #727272 1px 3px);
}

.panel-body {
    padding: 8px 3px 7px;
    display: flex;
    flex-direction: column;
    gap: 5px;
}

.tool-body {
    padding: 9px 8px 6px 9px;
}

.tool-body h3 {
    margin-bottom: -5px;
}

.tool-body .row .btn:not(.ic) {
    flex: 1;
}

.skeleton {
    gap: 4px;
}

.skeleton h3 {
    height: 24px;
    line-height: 24px;
    margin-bottom: -4px;
}

.skeleton .pair + h3 {
    height: 22px;
    line-height: 20px;
}

.pair {
    display: flex;
    gap: 8px;
}

.pair > .row {
    flex: 1;
}

/* scrollbars */
.scroll {
    flex: none;
    width: 13px;
    border-radius: 7px;
    background: linear-gradient(to right, #4e4e4e, #606060);
}

.thumb {
    border: 1px solid #4a4a4a;
    border-radius: 7px;
    background: linear-gradient(to right, #989898, #7e7e7e);
}

.operator {
    flex: 0 0 28.5%;
    display: flex;
    gap: 8px;
    padding: 0 4px 0 0;
    overflow: hidden;
    border-top: 1px solid #868686;
}

.operator .panel {
    flex: 1;
    min-width: 0;
}

.operator .scroll {
    margin: 3px 0;
}

.op-body {
    padding: 8px 0 0 8px;
    gap: 6px;
}

.op-body h3 {
    margin-bottom: -6px;
}

.op-thumb {
    height: 47%;
}

.nums {
    border: 1px solid #2e2e2e;
    border-radius: 9px;
    overflow: hidden;
    background: #2e2e2e;
    display: grid;
    grid-template-columns: minmax(0, 1fr);
    grid-auto-rows: 19px;
    gap: 1px;
    margin-bottom: -1px;
}

.num {
    display: flex;
    align-items: center;
    padding: 0 5px;
    background: linear-gradient(#999, #b4b4b4);
}

.num::before,
.num::after {
    content: '';
    border: solid transparent;
    border-width: 3px 4px 3px 0;
    border-right-color: #6a6a6a;
    margin-right: 7px;
}

.num::after {
    border-width: 3px 0 3px 4px;
    border-color: transparent transparent transparent #6a6a6a;
    margin: 0 0 0 6px;
}

.num input {
    flex: 1;
    min-width: 0;
    padding: 0;
    border: 0;
    background: none;
    text-align: right;
    font-family: "DejaVu Sans", sans-serif;
}

/* tick boxes */
.check {
    display: flex;
    align-items: center;
    gap: 8px;
    height: 20px;
    padding-left: 3px;
}

.check input {
    appearance: none;
    position: relative;
    width: 14px;
    height: 14px;
    border: 1px solid #2a2a2a;
    border-radius: 4px;
    background: linear-gradient(#4a4a4a, #5a5a5a);
}

.check input:checked::after {
    content: '';
    position: absolute;
    left: 4px;
    top: -3px;
    width: 5px;
    height: 11px;
    border: solid #d8d8d8;
    border-width: 0 2px 2px 0;
    transform: rotate(38deg);
}

.check input:checked + span {
    color: #fff;
}

.checks {
    display: grid;
    grid-template-columns: 1fr 1fr;
    column-gap: 8px;
    margin: -1px 0;
}

.checks .check {
    height: 22px;
}

/* 3D view */
.canvas {
    position: relative;
    flex: 1;
    overflow: hidden;
    background: #393939;
}

.view-name {
    position: absolute;
    left: 19px;
    top: 8px;
    color: #fff;
}

.active-bone {
    position: absolute;
    left: 69px;
    bottom: 3px;
    color: #d8d81c;
}

.line-x,
.line-floor {
    position: absolute;
    left: 0;
    right: 0;
    top: 53.3%;
    height: 2px;
    background: #000;
    border-top: 1px solid #6a1e22;
}

.line-floor {
    top: 67.7%;
    height: 1px;
    border: 0;
}

.line-z {
    position: absolute;
    top: 0;
    bottom: 0;
    left: 48.1%;
    width: 5px;
    background: linear-gradient(to right, #8ff5e4 1px, #2b5f5a 1px 2px, #393939 2px 3px, #000 3px);
}

.gizmo {
    position: absolute;
    left: 48.1%;
    top: 53.3%;
    width: 100px;
    height: 120px;
    margin: -87px 0 0 -83px;
    overflow: visible;
}

.mini-axis {
    position: absolute;
    left: 0;
    bottom: 22px;
    width: 34px;
    height: 36px;
}

.region-toggle {
    position: absolute;
    right: 0;
    top: 22px;
    width: 15px;
    height: 14px;
    padding: 0;
    border: 0;
    border-radius: 5px 0 0 5px;
    background: #2b2b2b;
    color: #999;
    line-height: 14px;
    font-weight: bold;
}

/* dope sheet */
.dope {
    flex: none;
    display: flex;
    height: 178px;
    overflow: hidden;
    background: #6b6b6b;
}

.channels {
    flex: none;
    width: 200px;
    padding-top: 8px;
    border-right: 1px solid #777;
}

.channel {
    display: flex;
    align-items: center;
    height: 18px;
    background: #5e7a58;
    border-bottom: 1px solid #66785f;
}

.channel span {
    flex: 1;
    padding-left: 4px;
    line-height: 17px;
}

.channel .icon:not(:first-child) {
    margin-left: 3px;
}

.channel.summary {
    background: #cb7218;
    border: 0;
    border-radius: 8px 0 0 0;
}

.channel.summary span {
    padding-left: 2px;
}

.timeline {
    flex: 1;
    min-width: 0;
    display: flex;
    flex-direction: column;
}

.frames {
    position: relative;
    height: 161px;
    overflow: hidden;
    padding-top: 8px;
    background:
        repeating-linear-gradient(to right, transparent 0 calc(100% / 28 - 1px), #585a58 calc(100% / 28 - 1px) calc(100% / 28)),
        repeating-linear-gradient(#686b67 0 17px, #6c6f6b 17px 18px);
}

.band {
    height: 16px;
    background: rgba(178, 110, 52, .6);
}

/* frame 0 is the second of the 28 divisions */
.current {
    position: absolute;
    z-index: 1;
    top: 0;
    bottom: 0;
    left: calc(100% * 2 / 28 - 1px);
    width: 2px;
    background: #5fd341;
}

.keys {
    position: absolute;
    z-index: 0;
    top: 7px;
    left: calc(100% * 2 / 28 - 6px);
    display: flex;
    flex-direction: column;
}

.keys svg {
    width: 12px;
    height: 12px;
    margin: 3px 0;
}

.current-label {
    position: absolute;
    z-index: 2;
    left: calc(100% * 2 / 28 - 1px);
    bottom: 1px;
    width: 19px;
    background: #4fc132;
    text-align: center;
    line-height: 15px;
    font-family: "DejaVu Sans", sans-serif;
    padding-left: 3px;
}

.ruler {
    display: flex;
    height: 13px;
    margin: 0 6px 0 4px;
    padding: 0 25px;
    border: 1px solid #444;
    border-radius: 7px;
    background: linear-gradient(#949494, #7c7c7c);
    position: relative;
    line-height: 12px;
    text-align: center;
    font-family: "DejaVu Sans", sans-serif;
}

.ruler span {
    flex: 1 1 0;
}

.ruler::before,
.ruler::after {
    content: '';
    position: absolute;
    top: 1px;
    left: 0;
    width: 9px;
    height: 9px;
    border-radius: 50%;
    background: #6a6a6a;
}

.ruler::after {
    left: auto;
    right: 0;
}

.dope-side {
    position: relative;
    display: flex;
    flex: none;
    width: 17px;
    padding: 5px 4px 22px 0;
}

.dope-thumb {
    width: 13px;
    height: 17px;
}

.users {
    width: 24px;
    justify-content: center;
    font-family: "DejaVu Sans", sans-serif;
}

.push {
    width: 89px;
    padding: 0 3px;
}

.stash {
    width: 63px;
    padding: 0 3px;
}

.sum {
    width: 87px;
    padding: 0 3px;
}

.off .icon {
    opacity: .8;
}

.off .btn {
    background: #818181;
    border-color: #555;
}

/* outliner */
.outliner {
    position: relative;
    flex: 19 1 0;
    min-height: 0;
    display: flex;
    flex-direction: column;
    border-bottom: 1px solid #000;
}

.tree {
    position: relative;
    flex: 1;
    overflow: hidden;
    padding-top: 2px;
    background: repeating-linear-gradient(#717171 1px 21px, #777 21px 41px);
}

.node {
    position: relative;
    display: flex;
    align-items: center;
    gap: 4px;
    height: 20px;
    padding-left: 3px;
}

.node.child {
    padding-left: 28px;
}

.node.deep {
    padding-left: 23px;
}

.node.deep .fold {
    margin-right: 5px;
}

.node .sel {
    color: #fff;
}

.node:first-child .fold {
    margin-right: 5px;
}

.fold {
    width: 10px;
    height: 10px;
    flex: none;
    padding: 0;
    border: 1px solid #222;
    border-radius: 50%;
    background: #e4e4e4;
    line-height: 8px;
    font-weight: bold;
    font-size: 10px;
}

.nofold {
    width: 10px;
}

.halo {
    border-radius: 50%;
    background: rgba(255, 255, 255, .3);
    box-shadow: 0 0 0 1px rgba(255, 255, 255, .3);
}

.halo.orange {
    background: #d48a3a;
    box-shadow: 0 0 0 1px #d48a3a;
}

.split {
    width: 1px;
    height: 12px;
    margin: 0 7px 0 5px;
    background: #444;
}

.cut {
    width: 10px;
    margin-left: -2px;
}

.toggles {
    position: absolute;
    right: 2px;
    top: 2px;
    display: flex;
    gap: 4px;
}

/* restriction columns */
.cols {
    position: absolute;
    top: 0;
    bottom: 0;
    right: 0;
    width: 60px;
    background: repeating-linear-gradient(to right, #5c5c5c 0 1px, transparent 1px 20px);
}

.scroll.flat {
    width: auto;
    height: 13px;
    margin: 2px 6px 4px 4px;
    background: linear-gradient(#565656, #636363);
}

.tree-thumb {
    width: 84%;
    height: 13px;
    background: linear-gradient(#989898, #808080);
}

/* properties */
.props {
    position: relative;
    flex: 26 1 0;
    min-height: 0;
    display: flex;
    flex-direction: column;
}

.contexts {
    margin-left: 3px;
}

.contexts .dark .icon {
    opacity: .7;
}

.props-body {
    flex: 1;
    min-height: 0;
    display: flex;
    gap: 5px;
    padding: 0 4px 0 5px;
    overflow: hidden;
}

.props-list {
    flex: 1;
    min-width: 0;
}

.props-body .scroll {
    margin: 5px 0 4px;
}

.props-thumb {
    height: 77%;
}

.crumbs {
    display: flex;
    align-items: center;
    gap: 5px;
    height: 36px;
    padding-left: 5px;
    white-space: nowrap;
}

.crumbs .icon:first-child {
    margin-right: 2px;
}

.crumbs i {
    border: solid transparent;
    border-width: 4px 0 4px 5px;
    border-left-color: #2a2a2a;
    margin-right: 9px;
}

.crumbs span + i {
    margin-left: 2px;
}

.crumbs span {
    margin-left: -2px;
}

.groups {
    display: flex;
    justify-content: space-between;
    align-items: flex-start;
    gap: 8px;
}

.list {
    position: relative;
    flex: 1;
    height: 43px;
    display: flex;
    align-items: flex-end;
    padding: 0 9px 5px;
    border: 1px solid #3a3a3a;
    border-radius: 4px;
    background: #808080;
}

.list .fold {
    width: 9px;
    height: 9px;
    border-color: #555;
    background: #aaa;
    line-height: 7px;
    font-size: 8px;
}

.handle {
    margin: 0 auto 2px;
    width: 14px;
    height: 4px;
    border: solid #222;
    border-width: 1px 0;
}
```

FILE: script.js
```js
var bones = ['L Clavicle', 'L UpperArm', 'L Forearm', 'L Hand', 'L Finger0', 'L Finger01', 'L Finger02', 'L Finger1'];

function icon(id, cls) {
    return '<svg class="' + (cls || 'icon') + '"><use href="#' + id + '"/></svg>';
}

var channels = document.getElementById('channels');
var keys = document.getElementById('keys');
keys.innerHTML = icon('key', 'key');
bones.forEach(function (name) {
    channels.insertAdjacentHTML('beforeend',
        '<div class="channel">' + icon('triRight') + '<span>' + name + '</span>' +
        icon('wrench') + icon('speaker') + icon('lock') + '</div>');
    keys.insertAdjacentHTML('beforeend', icon('key', 'key'));
});

// frame numbers
var ruler = document.getElementById('ruler');
for (var f = -5; f <= 125; f += 5) {
    ruler.insertAdjacentHTML('beforeend', '<span>' + f + '</span>');
}

// two rows of layer buttons per block
document.querySelectorAll('.layers[data-cols]').forEach(function (box) {
    var cols = Number(box.dataset.cols);
    box.style.gridTemplateColumns = 'repeat(' + cols + ', 1fr)';
    for (var i = 0; i < cols * 2; i++) {
        var b = document.createElement('button');
        b.setAttribute('aria-label', 'Layer ' + (i + 1));
        if (box.dataset.active === String(i)) {
            b.className = box.dataset.on ? 'dot on' : 'dot';
        }
        box.appendChild(b);
    }
});
```
